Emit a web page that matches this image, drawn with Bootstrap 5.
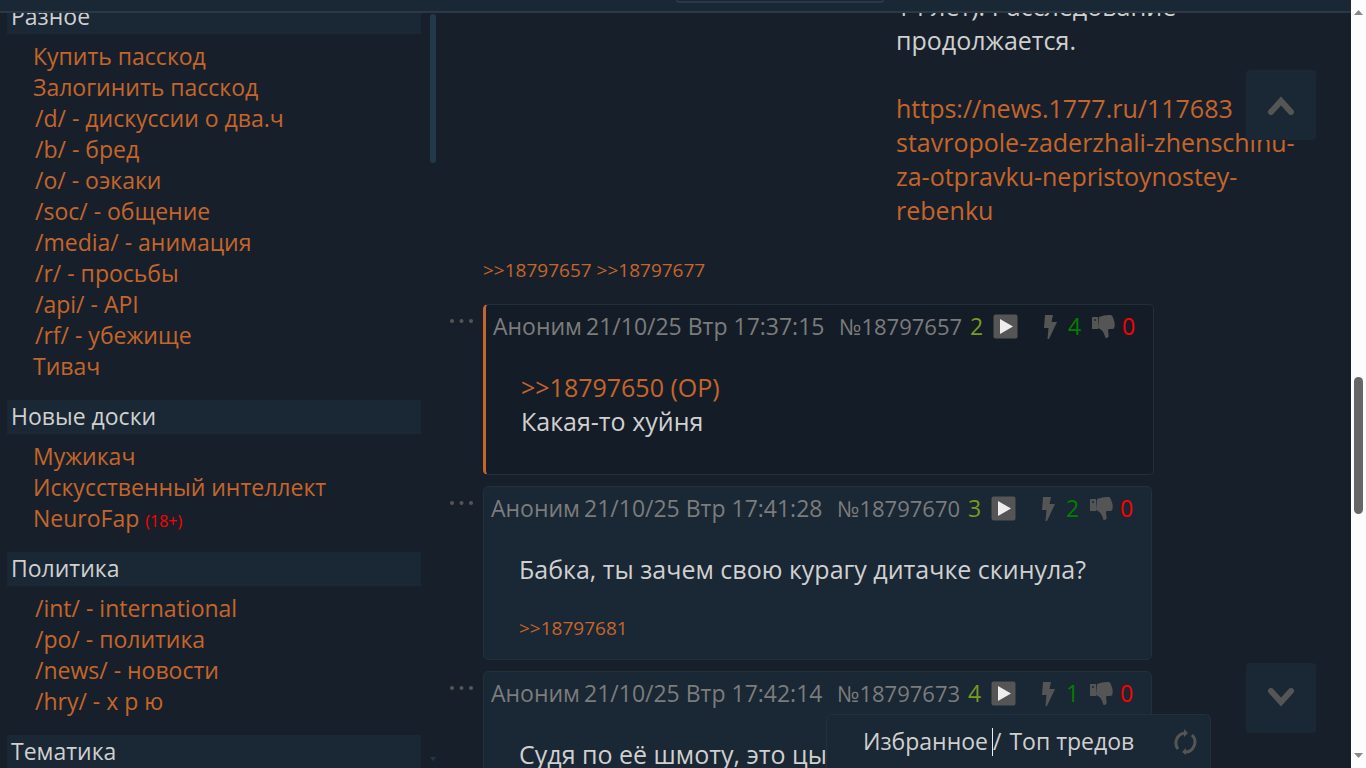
<!DOCTYPE html>
<html lang="ru">
<head>
<meta charset="utf-8">
<meta name="viewport" content="width=device-width, initial-scale=1">
<title>Два.ч</title>
<link href="https://cdn.jsdelivr.net/npm/bootstrap@5.3.0/dist/css/bootstrap.min.css" rel="stylesheet">
<script src="https://cdn.jsdelivr.net/npm/bootstrap@5.3.0/dist/js/bootstrap.bundle.min.js" defer></script>
<style>
:root{--page:#17202a;--panel:#1a2734;--line:#22303e;--link:#c5652b;--txt:#d0d0d0;--dim:#7c7c7c;--icon:#555}
body{background:var(--page);color:var(--txt);font:23px/31px "Trebuchet MS","Open Sans",sans-serif}
a{color:var(--link);text-decoration:none}
a:hover{color:#e07a3c}
button{color:inherit}
.topbar{height:13px;margin-right:15px;background:var(--panel);border-bottom:2px solid #2b3947}
.searchbox{position:absolute;left:50%;top:0;width:208px;height:3px;border:2px solid #2b3947;border-top:0;border-radius:0 0 8px 8px}
.side{flex:0 0 438px;padding:0 17px 0 7px}
.side h2{font-size:23px;line-height:32px;padding:0 4px 2px;margin:0;background:var(--panel);font-weight:400}
.side ul{padding:7px 0 18px 26px;margin:0}
.board a{padding-left:2px}
.adult{font-size:16px;line-height:1;color:red}
.side-track{width:6px;padding:14px 0 7px;flex:none;margin-left:-8px}
.side-thumb{height:149px;border-radius:3px;background:#22384b}
.side-end{border:3px solid transparent;border-top:4px solid #22384b;border-bottom:0}
.feed{padding-left:47px}
.msg{font-size:25px;line-height:34px}
.op-text{margin:-11px 48px 28px 413px}
.replies{font-size:19px;line-height:30px}
.op-replies{margin-bottom:19px}
.post-row{margin-bottom:11px}
.dots{flex:none;width:33px;margin-left:-33px;height:30px;padding:0 0 2px;border:0;background:none;text-align:left;line-height:26px}
.post{background:var(--panel);border:1px solid #22303c;border-radius:5px;padding:6px 16px 9px 7px}
.post.active{background:#141d27;border-left:3px solid var(--link)}
.post-head{grid-template-columns:93px 253px 131px 23px 49px 26px 23px 31px 15px;height:30px;color:var(--dim);white-space:nowrap}
.post-head button{border:0;padding:0;background:none;text-align:left;display:flex}
.num{font-size:22px}
.ord{color:#789922}.up{color:green}.down{color:red}
.post .msg{margin:29px 28px 27px}
.post .replies{margin:0 28px 7px}
.jumps{padding:70px 50px 35px 0}
.jump{width:70px;height:70px;background:var(--panel);border:0;border-radius:4px;padding:0}
.favbar{height:54px;width:385px;margin-right:155px;padding:0 13px 0 36px;background:var(--panel);border:1px solid var(--line);border-bottom:0;border-radius:6px 6px 0 0}
.favbar a{color:var(--txt)}
.caret{width:1px;height:28px;background:#eee}
.page-track{width:15px;background:#fcfcfc;padding:10px 3px}
.page-gap{flex:362 0 0}
.page-gap-end{flex:239 0 0}
.page-thumb{flex:137 0 0;border-radius:5px;background:#666}
</style>
</head>
<body class="vh-100 overflow-hidden">
<svg class="d-none">
  <symbol id="i-play" viewBox="0 0 25 25"><rect x=".5" y=".5" width="24" height="24" rx="2" fill="#555"/><path d="M7 5 20 12.500 7 20z" fill="#eee"/></symbol>
  <symbol id="i-bolt" viewBox="0 0 16 26"><path d="M3 1h8l-1.500 7H15L7 25H5.500l1-11H2z" fill="#555"/></symbol>
  <symbol id="i-thumb" viewBox="0 0 24 26"><path d="M1 4q0-1 1-1h5v12H1zM8 3q5-2 10-2h2q2 1 2 3 1 1 1 3 1 1 .5 3 .5 1 0 3-.5 2-2 2h-4q-1 2 0 5v3q-1 1-3 1-1-4-3-7-2-2-4.500-3z" fill="#555"/><circle cx="4" cy="6" r="1" fill="#1a2530"/></symbol>
  <symbol id="i-dots" viewBox="0 0 24 6"><circle cx="2" cy="3" r="2" fill="#555"/><circle cx="11.500" cy="3" r="2" fill="#555"/><circle cx="21" cy="3" r="2" fill="#555"/></symbol>
</svg>

<header class="topbar fixed-top"><div class="searchbox"></div></header>

<div class="d-flex h-100">
  <nav class="side overflow-hidden" aria-label="Доски">
    <h2>Разное</h2>
    <ul class="list-unstyled">
      <li><a href="#">Купить пасскод</a></li>
      <li><a href="#">Залогинить пасскод</a></li>
      <li class="board"><a href="#">/d/ - дискуссии о два.ч</a></li>
      <li class="board"><a href="#">/b/ - бред</a></li>
      <li class="board"><a href="#">/o/ - оэкаки</a></li>
      <li class="board"><a href="#">/soc/ - общение</a></li>
      <li class="board"><a href="#">/media/ - анимация</a></li>
      <li class="board"><a href="#">/r/ - просьбы</a></li>
      <li class="board"><a href="#">/api/ - API</a></li>
      <li class="board"><a href="#">/rf/ - убежище</a></li>
      <li><a href="#">Тивач</a></li>
    </ul>
    <h2>Новые доски</h2>
    <ul class="list-unstyled">
      <li><a href="#">Мужикач</a></li>
      <li><a href="#">Искусственный интеллект</a></li>
      <li><a href="#">NeuroFap <span class="adult">(18+)</span></a></li>
    </ul>
    <h2>Политика</h2>
    <ul class="list-unstyled">
      <li class="board"><a href="#">/int/ - international</a></li>
      <li class="board"><a href="#">/po/ - политика</a></li>
      <li class="board"><a href="#">/news/ - новости</a></li>
      <li class="board"><a href="#">/hry/ - х р ю</a></li>
    </ul>
    <h2>Тематика</h2>
  </nav>
  <div class="side-track d-flex flex-column justify-content-between"><div class="side-thumb"></div><div class="side-end"></div></div>

  <main class="feed flex-grow-1 overflow-hidden">
    <div class="msg op-text">14 лет). Расследование<br>продолжается.<br><br><a href="#">https://news.1777.ru/117683<br>stavropole-zaderzhali-zhenschinu-<br>za-otpravku-nepristoynostey-<br>rebenku</a></div>
    <div class="replies op-replies"><a href="#">&gt;&gt;18797657</a> <a href="#">&gt;&gt;18797677</a></div>

    <div class="post-row d-flex">
      <button class="dots" aria-label="Меню"><svg width="24" height="6"><use href="#i-dots"/></svg></button>
      <article class="post active">
        <div class="post-head d-grid align-items-center">
          <span>Аноним</span><span>21/10/25 Втр 17:37:15</span><span class="num">№18797657</span><span class="ord">2</span>
          <button aria-label="Ответить"><svg width="25" height="25"><use href="#i-play"/></svg></button>
          <button aria-label="Нравится"><svg width="16" height="26"><use href="#i-bolt"/></svg></button><span class="up">4</span>
          <button aria-label="Не нравится"><svg width="24" height="26"><use href="#i-thumb"/></svg></button><span class="down">0</span>
        </div>
        <div class="msg"><a href="#">&gt;&gt;18797650 (OP)</a><br>Какая-то хуйня</div>
      </article>
    </div>

    <div class="post-row d-flex">
      <button class="dots" aria-label="Меню"><svg width="24" height="6"><use href="#i-dots"/></svg></button>
      <article class="post">
        <div class="post-head d-grid align-items-center">
          <span>Аноним</span><span>21/10/25 Втр 17:41:28</span><span class="num">№18797670</span><span class="ord">3</span>
          <button aria-label="Ответить"><svg width="25" height="25"><use href="#i-play"/></svg></button>
          <button aria-label="Нравится"><svg width="16" height="26"><use href="#i-bolt"/></svg></button><span class="up">2</span>
          <button aria-label="Не нравится"><svg width="24" height="26"><use href="#i-thumb"/></svg></button><span class="down">0</span>
        </div>
        <div class="msg">Бабка, ты зачем свою курагу дитачке скинула?</div>
        <div class="replies"><a href="#">&gt;&gt;18797681</a></div>
      </article>
    </div>

    <div class="post-row d-flex">
      <button class="dots" aria-label="Меню"><svg width="24" height="6"><use href="#i-dots"/></svg></button>
      <article class="post">
        <div class="post-head d-grid align-items-center">
          <span>Аноним</span><span>21/10/25 Втр 17:42:14</span><span class="num">№18797673</span><span class="ord">4</span>
          <button aria-label="Ответить"><svg width="25" height="25"><use href="#i-play"/></svg></button>
          <button aria-label="Нравится"><svg width="16" height="26"><use href="#i-bolt"/></svg></button><span class="up">1</span>
          <button aria-label="Не нравится"><svg width="24" height="26"><use href="#i-thumb"/></svg></button><span class="down">0</span>
        </div>
        <div class="msg">Судя по её шмоту, это цы</div>
      </article>
    </div>
  </main>

  <div class="page-track flex-shrink-0 d-flex flex-column">
    <svg width="9" height="5"><path d="M0 5 4.500 0 9 5z" fill="#888"/></svg>
    <div class="page-gap"></div><div class="page-thumb"></div><div class="page-gap-end"></div>
    <svg width="9" height="5"><path d="M0 0h9L4.500 5z" fill="#888"/></svg>
  </div>
</div>

<div class="jumps pe-none position-fixed top-0 bottom-0 end-0 d-flex flex-column justify-content-between">
  <button class="jump pe-auto d-flex align-items-center justify-content-center" aria-label="Вверх"><svg width="28" height="20"><path d="M4 17 14 6 24 17" fill="none" stroke="#555" stroke-width="6" stroke-linecap="round"/></svg></button>
  <button class="jump pe-auto d-flex align-items-center justify-content-center" aria-label="Вниз"><svg width="28" height="20"><path d="M4 3 14 14 24 3" fill="none" stroke="#555" stroke-width="6" stroke-linecap="round"/></svg></button>
</div>
<div class="favbar position-fixed bottom-0 end-0 d-flex align-items-center">
  <a href="#" class="me-1">Избранное</a><span class="caret"></span><span class="me-2">/</span><a href="#" class="me-auto">Топ тредов</a>
  <svg width="24" height="26" viewBox="0 0 24 26" fill="none" stroke="#555" stroke-width="3"><path d="M5 20A10 10 0 0 1 12 4M19 6A10 10 0 0 1 12 23"/><path d="m11 0 4 4-4 4zM13 19l-4 4 4 3z" fill="#555" stroke="none"/></svg>
</div>
</body>
</html>
